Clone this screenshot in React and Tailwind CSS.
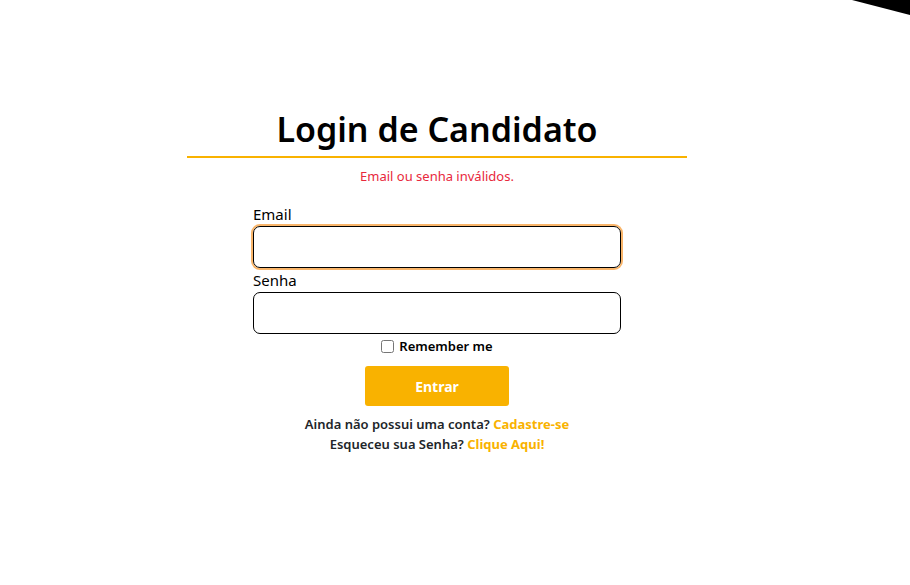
import React, { useState } from "react";

const App = () => {
  const [email, setEmail] = useState("");
  const [senha, setSenha] = useState("");
  const [remember, setRemember] = useState(false);

  return (
    <div className="relative min-h-[585px] w-full overflow-hidden bg-white font-['Noto_Sans',sans-serif] text-black">
      {/* black corner shape */}
      <svg className="absolute right-0 top-0" width="60" height="16" viewBox="0 0 60 16">
        <polygon points="2,0 60,0 60,15" fill="#000" />
      </svg>

      <div className="ml-[187px] w-[500px] pt-[109px]">
        <h1 className="text-center text-[34px] font-semibold leading-[40px]">Login de Candidato</h1>
        <div className="mt-[7px] h-[2px] w-full bg-[#f9b200]" />
        <p className="mt-[9px] text-center text-[13px] leading-[18px] text-[#e8283c]">
          Email ou senha inválidos.
        </p>

        <form className="mx-auto mt-[20px] flex w-[368px] flex-col" onSubmit={(e) => e.preventDefault()}>
          <label className="text-[15px] leading-[18px]">Email</label>
          <input
            type="email"
            value={email}
            onChange={(e) => setEmail(e.target.value)}
            className="mt-[3px] h-[42px] rounded-[7px] border border-black px-2 shadow-[0_0_0_2px_#f9b56a] outline-none"
          />
          <label className="mt-[3px] text-[15px] leading-[18px]">Senha</label>
          <input
            type="password"
            value={senha}
            onChange={(e) => setSenha(e.target.value)}
            className="mt-[3px] h-[42px] rounded-[7px] border border-black px-2 outline-none"
          />
          <label className="mt-[4px] flex items-center justify-center gap-[5px] text-[13px] font-semibold leading-[16px]">
            <input
              type="checkbox"
              checked={remember}
              onChange={(e) => setRemember(e.target.checked)}
              className="h-[13px] w-[13px]"
            />
            Remember me
          </label>
          <button
            type="submit"
            className="mx-auto mt-[12px] h-[40px] w-[144px] rounded-[3px] bg-[#f9b200] text-[14px] font-bold text-white"
          >
            Entrar
          </button>
        </form>

        <div className="mt-[8px] text-center text-[13px] font-semibold leading-[20px] text-[#212529]">
          <p>
            Ainda não possui uma conta? <a href="#" className="font-bold text-[#f9b200]">Cadastre-se</a>
          </p>
          <p>
            Esqueceu sua Senha? <a href="#" className="font-bold text-[#f9b200]">Clique Aqui!</a>
          </p>
        </div>
      </div>
    </div>
  );
};

export default App;
